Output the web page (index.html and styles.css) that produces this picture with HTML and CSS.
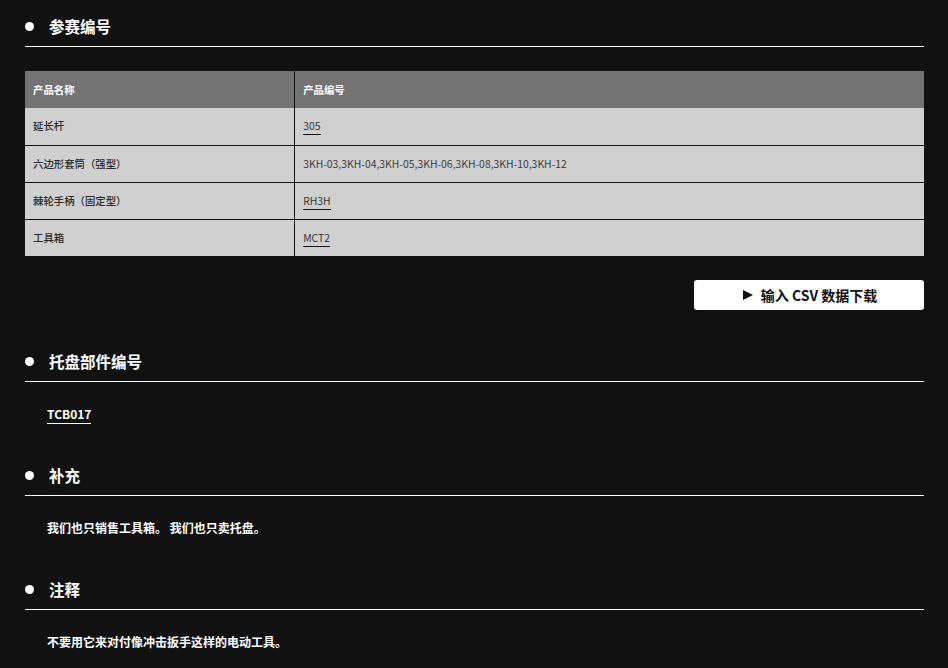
FILE: index.html
```html
<!DOCTYPE html>
<html lang="zh-CN">
<head>
<meta charset="utf-8">
<title>参赛编号</title>
<link rel="stylesheet" href="styles.css">
</head>
<body>
<main class="page">
  <section class="section">
    <h2 class="heading">参赛编号</h2>
    <table class="parts">
      <thead>
        <tr><th class="col-name">产品名称</th><th>产品编号</th></tr>
      </thead>
      <tbody>
        <tr><td class="name">延长杆</td><td><a class="code" href="#">305</a></td></tr>
        <tr><td class="name">六边形套筒（强型）</td><td>3KH-03,3KH-04,3KH-05,3KH-06,3KH-08,3KH-10,3KH-12</td></tr>
        <tr><td class="name">棘轮手柄（固定型）</td><td><a class="code" href="#">RH3H</a></td></tr>
        <tr><td class="name">工具箱</td><td><a class="code" href="#">MCT2</a></td></tr>
      </tbody>
    </table>
    <div class="actions">
      <a class="btn" href="#"><svg class="tri" width="10" height="10" viewBox="0 0 10 10"><path d="M0 0 L10 5 L0 10 Z" fill="#111"/></svg><span>输入 CSV 数据下载</span></a>
    </div>
  </section>

  <section class="section">
    <h2 class="heading">托盘部件编号</h2>
    <p class="body"><a class="link" href="#">TCB017</a></p>
  </section>

  <section class="section">
    <h2 class="heading">补充</h2>
    <p class="body">我们也只销售工具箱。 我们也只卖托盘。</p>
  </section>

  <section class="section">
    <h2 class="heading">注释</h2>
    <p class="body">不要用它来对付像冲击扳手这样的电动工具。</p>
  </section>
</main>
</body>
</html>
```

FILE: styles.css
```css
* { box-sizing: border-box; }
html, body {
  margin: 0;
  padding: 0;
  background: #111111;
  color: #ffffff;
  font-family: "Noto Sans CJK SC", "Noto Sans", sans-serif;
}
.page {
  margin: 0 24px 0 25px;
  padding-top: 14px;
}
.section {
  margin-bottom: 39px;
}
.heading {
  margin: 0;
  display: flex;
  align-items: center;
  gap: 15px;
  font-size: 15.5px;
  font-weight: 700;
  line-height: 24px;
  padding-bottom: 8px;
  border-bottom: 1px solid #ffffff;
}
.heading::before {
  content: "";
  width: 9px;
  height: 9px;
  border-radius: 50%;
  background: #ffffff;
  flex: none;
}
.parts {
  width: 100%;
  margin-top: 24px;
  border-collapse: collapse;
  font-size: 10.4px;
  line-height: 16px;
}
.parts th, .parts td {
  text-align: left;
  padding: 0 8px;
  height: 37px;
}
.parts th {
  background: #737373;
  color: #ffffff;
  font-weight: 700;
}
.parts th + th { border-left: 1px solid #111111; }
.parts td {
  background: #d0d0d0;
  color: #3a3a3a;
  font-weight: 400;
}
.parts td.name {
  color: #2a2a2a;
  font-weight: 500;
}
.parts td + td { border-left: 1px solid #111111; }
.parts tbody tr + tr td { border-top: 1px solid #111111; }
.col-name { width: 30%; }
.code {
  color: #333333;
  text-decoration: none;
  border-bottom: 1px solid #111111;
  padding-bottom: 1px;
}
.actions {
  display: flex;
  justify-content: flex-end;
  margin-top: 24px;
}
.btn {
  display: flex;
  align-items: center;
  justify-content: center;
  gap: 8px;
  width: 230px;
  height: 30px;
  background: #ffffff;
  border-radius: 3px;
  color: #111111;
  text-decoration: none;
  font-size: 14px;
  font-weight: 700;
  padding-left: 2px;
}
.body {
  margin: 22px 0 0 22px;
  font-size: 12px;
  font-weight: 700;
  line-height: 20px;
}
.link {
  color: #ffffff;
  text-decoration: none;
  border-bottom: 1px solid #ffffff;
  padding-bottom: 1px;
}
```
